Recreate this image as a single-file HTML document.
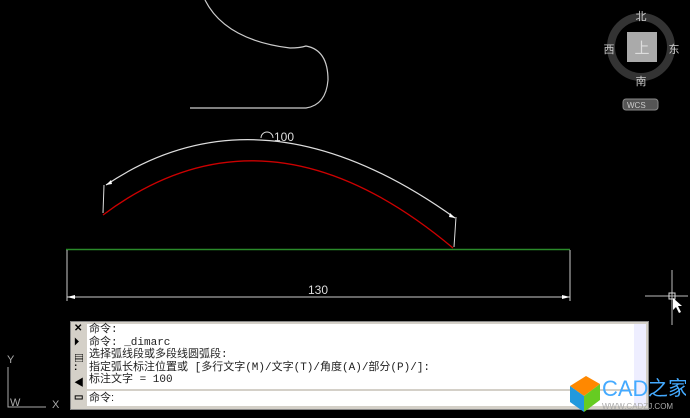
<!DOCTYPE html>
<html><head><meta charset="utf-8"><style>
body{margin:0;background:#000;width:690px;height:415px;overflow:hidden;position:relative;font-family:"Liberation Sans","Noto Sans CJK SC",sans-serif}
.cmd{position:absolute;left:70px;top:321px;width:577px;height:87px;background:#d4d0c8;border:1px solid #888}
.txt{position:absolute;left:16px;top:2px;width:545px;height:65px;background:#fff;font-size:11px;line-height:12.5px;color:#222;padding-left:2px;font-family:"Liberation Mono","Noto Sans CJK SC",monospace}
.inp{position:absolute;left:16px;top:69px;width:545px;height:15px;background:#fff;font-size:11px;line-height:15px;color:#222;padding-left:2px}
.sb{position:absolute;left:563px;top:2px;width:12px;height:82px;background:#eef}
.lt{position:absolute;left:3px;color:#000;font-size:10px;font-weight:bold}
</style></head><body>
<svg width="690" height="415" style="position:absolute;left:0;top:0">
<path d="M205 0 Q225 40 290 48 Q300 48 306 46 Q328 50 328 80 Q326 105 306 108 L190 108" fill="none" stroke="#ccc" stroke-width="1.2"/>
<path d="M103 215 Q267 92 453 248" fill="none" stroke="#c00" stroke-width="1.3"/>
<path d="M106 185 Q262 80 455 218" fill="none" stroke="#ddd" stroke-width="1.2"/>
<path d="M104 185 L103 213 M456 217 L454 247" stroke="#ddd"/>
<path d="M106 185 l5 -5 l1 4z M455 218 l-5 -5 l-1 4z" fill="#fff"/>
<path d="M261 138 a6 6 0 0 1 12 0" fill="none" stroke="#ddd"/>
<text x="274" y="141" fill="#ddd" font-size="12" font-family="Liberation Sans">100</text>
<line x1="66" y1="249.5" x2="570" y2="249.5" stroke="#2a8a2a" stroke-width="1.5"/>
<path d="M67 250 L67 301 M570 250 L570 301 M67 297 L570 297" stroke="#ccc"/>
<path d="M67 297 l8 -2 l0 4z M570 297 l-8 -2 l0 4z" fill="#fff"/>
<text x="308" y="294" fill="#ddd" font-size="12" font-family="Liberation Sans">130</text>
<path d="M672 270 L672 325 M645 296 L688 296" stroke="#bbb"/>
<rect x="669" y="293" width="6" height="6" fill="none" stroke="#ddd"/>
<path d="M673 298 l0 12 l3 -3 l3 6 l2 -1 l-3 -6 l4 0z" fill="#fff"/>
<circle cx="641" cy="47" r="30" fill="none" stroke="#333" stroke-width="8"/>
<rect x="627" y="32" width="30" height="30" fill="#aaa"/>
<text x="642" y="53" fill="#ddd" font-size="15" text-anchor="middle" font-family="Noto Sans CJK SC">上</text>
<text x="641" y="20" fill="#ccc" font-size="11" text-anchor="middle" font-family="Noto Sans CJK SC">北</text>
<text x="641" y="85" fill="#ccc" font-size="11" text-anchor="middle" font-family="Noto Sans CJK SC">南</text>
<text x="609" y="53" fill="#ccc" font-size="11" text-anchor="middle" font-family="Noto Sans CJK SC">西</text>
<text x="674" y="53" fill="#ccc" font-size="11" text-anchor="middle" font-family="Noto Sans CJK SC">东</text>
<rect x="623" y="99" width="35" height="11" rx="3" fill="#555" stroke="#888"/>
<text x="627" y="108" fill="#ccc" font-size="8" font-family="Liberation Sans">WCS</text>
<path d="M8 367 L8 407 L46 407" stroke="#aaa" fill="none"/>
<text x="7" y="363" fill="#aaa" font-size="11">Y</text>
<text x="52" y="408" fill="#aaa" font-size="11">X</text>
<text x="10" y="406" fill="#aaa" font-size="11">W</text>
</svg>
<div class="cmd">
<div class="lt" style="top:1px">✕</div><div class="lt" style="top:15px">⏵</div><div class="lt" style="top:28px">▤</div><div class="lt" style="top:40px">:</div><div class="lt" style="top:52px">◀</div><div class="lt" style="top:70px">▭</div>
<div class="txt">命令:<br>命令:  _dimarc<br>选择弧线段或多段线圆弧段:<br>指定弧长标注位置或 [多行文字(M)/文字(T)/角度(A)/部分(P)/]:<br>标注文字 = 100</div>
<div class="inp">命令:</div>
<div class="sb"></div>
</div>
<svg width="130" height="50" style="position:absolute;left:556px;top:368px">
<path d="M14 18 L30 8 L44 16 L28 28z" fill="#f80"/>
<path d="M14 18 L28 28 L28 44 L14 34z" fill="#29d"/>
<path d="M28 28 L44 16 L44 32 L28 44z" fill="#6c2"/>
<text x="46" y="28" fill="#4af" font-size="22" font-family="Liberation Sans">CAD</text>
<text x="92" y="27" fill="#4af" font-size="20" font-family="Noto Sans CJK SC">之家</text>
<text x="46" y="41" fill="#aaa" font-size="8" font-family="Liberation Sans">WWW.CADZJ.COM</text>
</svg>
</body></html>
